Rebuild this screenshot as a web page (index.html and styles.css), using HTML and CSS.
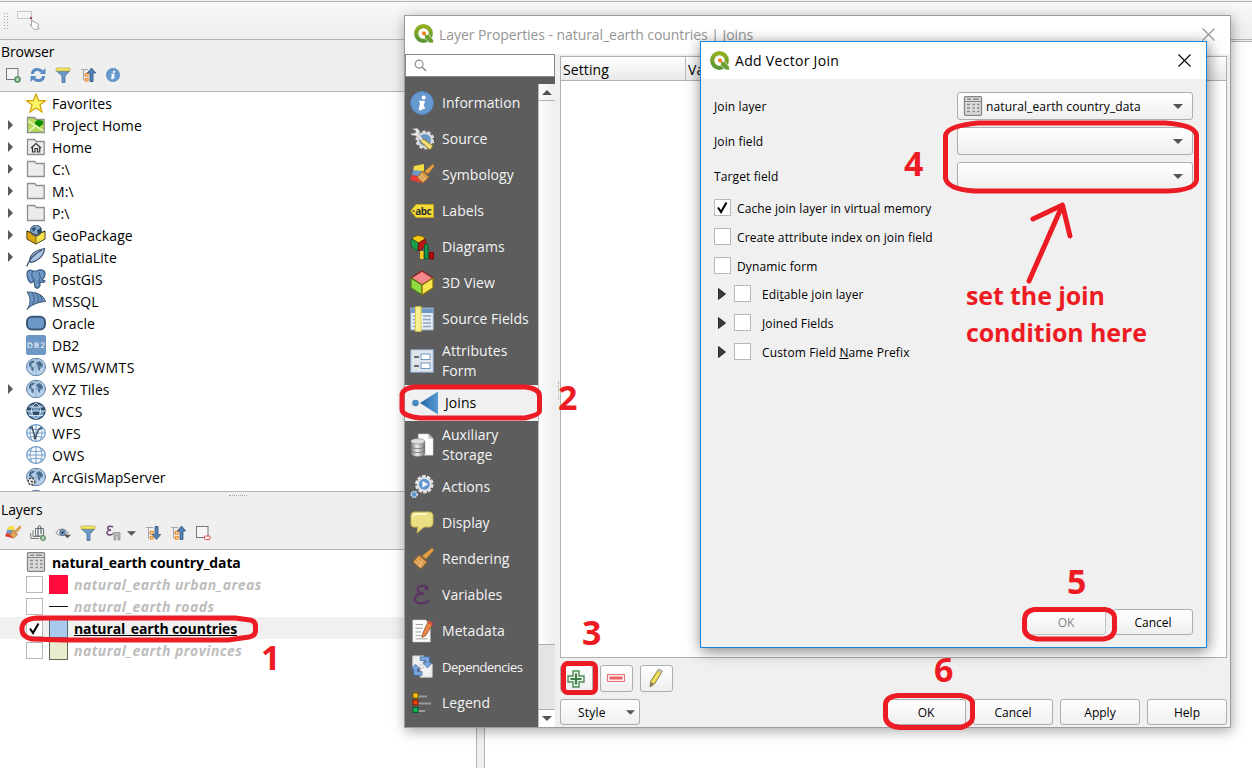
FILE: index.html
```html
<!DOCTYPE html>
<html lang="en">
<head>
<meta charset="utf-8">
<title>Layer Properties - Joins</title>
<link rel="stylesheet" href="styles.css">
</head>
<body>
<svg class="defs" width="0" height="0">
  <defs>
    <linearGradient id="joinGrad"><stop offset="0" stop-color="#2167a3"/><stop offset="1" stop-color="#5a9ad4"/></linearGradient>
    <linearGradient id="cylGrad"><stop offset="0" stop-color="#777"/><stop offset=".45" stop-color="#eee"/><stop offset="1" stop-color="#777"/></linearGradient>
    <linearGradient id="qGrad" x2="0" y2="1"><stop offset="0" stop-color="#93b023"/><stop offset="1" stop-color="#589632"/></linearGradient>
    <symbol id="tri" viewBox="0 0 5 10"><path d="M0 0L5 5L0 10Z" fill="#5a5a5a"/></symbol>
    <symbol id="tri2" viewBox="0 0 8 12"><path d="M.5 .5L7.500 6L.5 11.500Z" fill="#3c3c3c" stroke="#111" stroke-width=".8"/></symbol>
    <symbol id="down" viewBox="0 0 10 5"><path d="M0 0H10L5 5Z" fill="#555"/></symbol>
    <symbol id="tick" viewBox="0 0 17 17"><path d="M4 8.500L7 13L12.500 3.500" fill="none" stroke="#000" stroke-width="2"/></symbol>
    <symbol id="qgis" viewBox="0 0 20 20"><circle cx="9.500" cy="9.500" r="7.300" fill="none" stroke="url(#qGrad)" stroke-width="4.200"/><path d="M10.500 10.500L14.500 10.500L19.500 16V19H15.500L10.500 14Z" fill="#6aa030" stroke="#fff" stroke-width=".7"/><path d="M7.500 7.500L11.500 8L12.500 12Z" fill="#f0a050"/><circle cx="10" cy="9.500" r="1.900" fill="#ee7913"/></symbol>
    <symbol id="close" viewBox="0 0 13 13"><path d="M.5 .5L12.500 12.500M12.500 .5L.5 12.500" fill="none" stroke="currentColor" stroke-width="1.100"/></symbol>
    <symbol id="star" viewBox="0 0 20 20"><path d="M10 1L12.500 7.500L19.300 7.700L14 12L16 19L10 15L4 19L6 12L.7 7.700L7.500 7.500Z" fill="#fbf56a" stroke="#d3a70a" stroke-width="1.300"/></symbol>
    <symbol id="folder" viewBox="0 0 20 20"><path d="M1.500 2.500H8.500L10.500 4.500H18.200V17.500H1.500Z" fill="#ececec" stroke="#8e8e8e" stroke-width="1.300"/></symbol>
    <symbol id="project" viewBox="0 0 20 20"><path d="M1.500 2.500H8.500L10.500 4.500H18.200V17.500H1.500Z" fill="#b5dc58" stroke="#8e8e8e" stroke-width="1.300"/><path d="M2 6L17.500 16M3 16.500L9 11" stroke="#f4fbd9" stroke-width="1.200"/><path d="M9 7L12 4.800L17 6V9L13.500 12L9 9Z" fill="#0a8f08"/></symbol>
    <symbol id="home" viewBox="0 0 20 20"><use href="#folder"/><path d="M5 11L10 6.500L15 11M6.500 10V15H9V11.500H11.500V15H13.700V10" fill="none" stroke="#333" stroke-width="1.200"/></symbol>
    <symbol id="gpkg" viewBox="0 0 20 20"><path d="M1 6L10 10L19 6V14L10 19L1 14Z" fill="#f7e34a" stroke="#4a4320"/><path d="M1 6L10 10V19L1 14Z" fill="#dca60a" stroke="#4a4320" stroke-width=".7"/><circle cx="10" cy="5.500" r="5.500" fill="#86a9cd" stroke="#34506d"/><path d="M6 3L10 2L9 5L7 7ZM11 5L15 3V7L12 9Z" fill="#294a6b"/><path d="M1 6L10 10L19 6" fill="none" stroke="#4a4320"/></symbol>
    <symbol id="feather" viewBox="0 0 20 20"><path d="M3.500 14C4 7 10 3 18.500 1.500C18 8 14 13 5 15.500Z" fill="#a9c5e1" stroke="#3d5573" stroke-width="1.200"/><path d="M.8 19.500C3 13 8 7 16 3" fill="none" stroke="#3d5573" stroke-width="1.300"/></symbol>
    <symbol id="elephant" viewBox="0 0 20 20"><path d="M7 2C3 0 1 2 1 5C1 9 3 13 5 14C7 14 7 12 8 11L9 18C11 20 14 19 14 16V13C17 14 19 13 19 12L16 11C19 8 20 4 18 2C15 0 12 1 11 2Z" fill="#6d98c5" stroke="#3b5b7e" stroke-width="1.200"/><path d="M7 2C5 5 6 9 8 11M13 3C14 7 15 9 13 11V15" fill="none" stroke="#3b5b7e" stroke-width="1"/></symbol>
    <symbol id="mssql" viewBox="0 0 20 20"><path d="M1 1C10 1 17 3 19.500 10.500C12 11 5 14 1 18.500C5 13 5 6 1 1Z" fill="#6d98c5" stroke="#3b5b7e"/><path d="M6 1.500C9 6 9 10 6 14M10 2C13 6 13 10 11 12M14 4C16 7 16 9 15 11" fill="none" stroke="#3b5b7e"/></symbol>
    <symbol id="oracle" viewBox="0 0 20 20"><rect x="1" y="3.800" width="18" height="12.700" rx="5" fill="#6d98c5" stroke="#3b5673" stroke-width="2"/></symbol>
    <symbol id="db2" viewBox="0 0 20 20"><rect width="20" height="20" rx="2" fill="#6d98c5"/><text x="1" y="12.500" font-family="DejaVu Sans" font-size="7.500" textLength="18" fill="#fff">DB2</text></symbol>
    <symbol id="earth" viewBox="0 0 20 20"><ellipse cx="10" cy="10" rx="9.500" ry="8.700" fill="#b9d1e8" stroke="#5e82a8"/><path d="M3 6L6 3.500L9 4L7.500 6L5 7L6 9L8 11L7 14.500L5.500 13L5 10L3 9ZM11 5L14 4L17 7.500L16 11L15 9.500L13.500 14L12 12L11.500 8L10 7ZM10 2.500L12 2.500L11 3.500Z" fill="#4a6d92"/><path d="M10 1.500V18.500M1 10H19" stroke="#83a5c7" stroke-width=".6"/></symbol>
    <symbol id="wcs" viewBox="0 0 20 20"><ellipse cx="10" cy="10" rx="9" ry="8.200" fill="#6d98c5" stroke="#2f4b69" stroke-width="1.400"/><path d="M2 6H7V10H1.500ZM13 6H18V10H13ZM7 10H13V15H7ZM7 2L13 2V6H7Z" fill="#2f4b69"/><path d="M1 10H19M3 14.500H17M3 6H17M10 2C4 6 4 14 10 18C16 14 16 6 10 2" fill="none" stroke="#d5e4f2"/></symbol>
    <symbol id="ows" viewBox="0 0 20 20"><ellipse cx="10" cy="10" rx="9.300" ry="8.300" fill="#f4f8fc" stroke="#6d98c5" stroke-width="1.200"/><path d="M1 10H19M3 5.500C7 7 13 7 17 5.500M3 14.500C7 13 13 13 17 14.500M10 2V18M7 2C3 6 3 14 7 18M13 2C17 6 17 14 13 18" fill="none" stroke="#6d98c5" stroke-width=".9"/></symbol>
    <symbol id="wfs" viewBox="0 0 20 20"><use href="#ows"/><path d="M3.500 5L6 4L9 15L13 6L16 4.500" fill="none" stroke="#3f4f5f" stroke-width="1.400"/><circle cx="9" cy="15" r="1.400" fill="#3f4f5f"/></symbol>
    <symbol id="arcgis" viewBox="0 0 20 20"><use href="#earth"/><circle cx="5.500" cy="14.500" r="3.300" fill="#eee" stroke="#333" stroke-width="1.300" stroke-dasharray="2 1.200"/><path d="M4.500 13.500L7 14L6 16.500Z" fill="#333"/></symbol>
    <symbol id="table" viewBox="0 0 20 20"><rect x="1.500" y=".7" width="17" height="18.600" rx="1" fill="#dcdcdc" stroke="#858585" stroke-width="1.300"/><path d="M2 5.500H18" stroke="#858585"/><path d="M4 3.200H8M10 3.200H16M4 8.500H7M9.500 8.500H12M14 8.500H16.500M4 12H7M9.500 12H12M14 12H16.500M4 15.500H7M9.500 15.500H12M14 15.500H16.500" stroke="#8a8a8a" stroke-width="1.500"/></symbol>
    <symbol id="addlayer" viewBox="0 0 16 16"><rect x="1.500" y="1.500" width="11.500" height="11" fill="#f5f5f5" stroke="#777"/><circle cx="12.500" cy="12.500" r="2.600" fill="#a9cbae" stroke="#4b8856" stroke-width="1.300"/></symbol>
    <symbol id="refresh" viewBox="0 0 16 16"><path d="M2.500 7C2.500 2 9 1 12 4.500M13.500 9C13.500 14 7 15 4 11.500" fill="none" stroke="#5a8cc2" stroke-width="3"/><path d="M15.500 1V7H9.500ZM.5 15V9H6.500Z" fill="#5a8cc2"/></symbol>
    <symbol id="funnel" viewBox="0 0 16 16"><path d="M1.500 4H14.500L10 9V15.500H7V9Z" fill="#6d98c5" stroke="#44709e" stroke-width=".8"/><rect x="1" y="1" width="14" height="3" rx=".7" fill="#f5e763" stroke="#b4a43c" stroke-width=".7"/></symbol>
    <symbol id="treebits" viewBox="0 0 16 16"><path d="M1 2.500H8M3.500 3V13H5M3.500 8H5" fill="none" stroke="#a5a5a5"/><rect x="5.500" y="6.500" width="2.500" height="2.500" fill="#fff" stroke="#f18b25" stroke-width="1.200"/><rect x="5.500" y="11.500" width="2.500" height="2.500" fill="#fff" stroke="#f18b25" stroke-width="1.200"/></symbol>
    <symbol id="collapse" viewBox="0 0 16 16"><use href="#treebits"/><path d="M11.500 1L15.700 6H13V14.500H10V6H7.300Z" fill="#5582b5" stroke="#2e537c" stroke-width=".8"/></symbol>
    <symbol id="expand" viewBox="0 0 16 16"><use href="#treebits"/><path d="M10 1.500H13V9.500H15.700L11.500 14.500L7.300 9.500H10Z" fill="#5582b5" stroke="#2e537c" stroke-width=".8"/></symbol>
    <symbol id="info" viewBox="0 0 24 24"><circle cx="12" cy="12" r="11.500" fill="#6699d0" stroke="#4f80b5"/><circle cx="13.700" cy="6.500" r="2" fill="#fff"/><path d="M9 10.500H14L12.300 17.500L15 16.500M13.500 11L11.500 18.500H9.500L11 11" fill="#fff" stroke="#fff" stroke-width="1.500"/></symbol>
    <symbol id="brush" viewBox="0 0 24 24"><path d="M22 1L24 3L16 12L12 9Z" fill="#e6a044" stroke="#a86d23" stroke-width=".6"/><path d="M9 8L17 15L11 22L3 15Z" fill="#d99a4c" stroke="#9a621c" stroke-width=".8"/><path d="M7 12L13 18M5 14L11 20M9 20L13 13" stroke="#f3cf98" stroke-width=".8"/></symbol>
    <symbol id="symbology" viewBox="0 0 24 24"><path d="M4 3L14 1L14 8L3 8Z" fill="#f4dc43"/><path d="M3 7L12 8L9 14L2 12Z" fill="#6d98c5"/><path d="M2 12L8 13L12 20L0 17Z" fill="#e83a36"/><path d="M23 1L24.500 3L18 11L14.500 8.500Z" fill="#e6a044" stroke="#a86d23" stroke-width=".6"/><path d="M12.500 8L19 14L13 20L7 15Z" fill="#d99a4c" stroke="#9a621c" stroke-width=".8"/><path d="M11 11L16 17M9 13L14 18" stroke="#f3cf98" stroke-width=".8"/></symbol>
    <symbol id="pages" viewBox="0 0 16 16"><path d="M.8 8V13.500H9M3 5.500V11.500H10M5.500 3.500H13.500V11H5.500Z" fill="none" stroke="#777"/><path d="M8 11V3C8 0 11 0 11 3V9" fill="none" stroke="#456"/><circle cx="13" cy="13" r="2.500" fill="#a9cbae" stroke="#4b8856"/></symbol>
    <symbol id="eye" viewBox="0 0 18 16"><path d="M1 8C4 2 11 2 15 8C11 11 5 12 1 8Z" fill="#eee" stroke="#888"/><circle cx="8.500" cy="7.500" r="3.300" fill="#7ba4cd" stroke="#46688a"/><circle cx="8.500" cy="7.500" r="1.300" fill="#222"/><path d="M10 10H18L14 14Z" fill="#555"/></symbol>
    <symbol id="epsfunnel" viewBox="0 0 16 16"><path d="M8 2C4 0 2 2 3 4C4 5.500 6 5 6 5C2 5 1 8 3 9.500C5 10.500 7 9.500 8 8.500" fill="none" stroke="#6d4a78" stroke-width="1.500"/><path d="M8.500 7.500H15V15H13V11L11 10V15H9V10Z" fill="#bbb" stroke="#888" stroke-width=".7"/></symbol>
    <symbol id="remove" viewBox="0 0 16 16"><rect x="1.500" y="1.500" width="11.500" height="11" fill="#f5f5f5" stroke="#777"/><rect x="9.500" y="11" width="5.500" height="3.500" rx="1" fill="#fff" stroke="#e04848"/></symbol>
    <symbol id="source" viewBox="0 0 24 24"><circle cx="15" cy="13" r="7" fill="#6d98c5" stroke="#ddd" stroke-width="2"/><circle cx="15" cy="13" r="8.500" fill="none" stroke="#ddd" stroke-width="2" stroke-dasharray="3.300 2"/><path d="M12 11L23 19L20 23L10 14Z" fill="#f3df75" stroke="#8b7a28"/><path d="M2 2L7 1L10 4L9 7L13 12L11 14L6 9L1 8L1 6.500L5 6L6 4Z" fill="#e5e5e5" stroke="#777" stroke-width=".5"/></symbol>
    <symbol id="labels" viewBox="0 0 24 24"><path d="M6 5.500H23.500V18.500H6L.8 12Z" fill="#f3dc38" stroke="#c5a51a"/><circle cx="3.700" cy="12" r="1" fill="#555"/><text x="5.300" y="15.500" font-family="Noto Sans" font-weight="bold" font-size="10" textLength="16.500" fill="#333">abc</text></symbol>
    <symbol id="diagrams" viewBox="0 0 24 24"><path d="M8.500 8L2 4C4 0 12-1 15 4Z" fill="#f5c814" stroke="#604800" stroke-width=".7"/><path d="M8.500 8L2 4C-1 8 2 15 8 15.500Z" fill="#1c9d4b" stroke="#104d24" stroke-width=".7"/><path d="M8.500 8L15 4C18 9 13 15.500 8 15.500Z" fill="#b81818" stroke="#5b0909" stroke-width=".7"/><path d="M10 16H13.500V24H10Z" fill="#f5c814"/><path d="M14.500 9.500H18V24H14.500Z" fill="#18984a" stroke="#09582a"/><path d="M19.500 17.500H23.500V24H19.500Z" fill="#b80c0c" stroke="#700"/></symbol>
    <symbol id="cube" viewBox="0 0 24 26"><path d="M12 1L23 8L12 15L1 8Z" fill="#f48888" stroke="#8e2020" stroke-width="1.300"/><path d="M1 8L12 15V25L1 18Z" fill="#8fdc3e" stroke="#4e7417" stroke-width="1.200"/><path d="M23 8L12 15V25L23 18Z" fill="#fae64e" stroke="#806b11" stroke-width="1.200"/></symbol>
    <symbol id="fields" viewBox="0 0 24 26"><rect x=".7" y="2" width="22.600" height="22" fill="#e8edf3" stroke="#8ca5bf"/><path d="M1 2.500H23V7H1Z" fill="#6d98c5"/><path d="M3 10H9M3 13.500H9M3 17H9M3 20.500H9M13 10H21M13 13.500H21M13 17H21M13 20.500H21" stroke="#8ba8c5" stroke-width="1.500"/><rect x="5.500" y=".8" width="5.500" height="24.500" fill="#f7ef94" stroke="#e0cf46"/></symbol>
    <symbol id="form" viewBox="0 0 24 24"><rect x=".7" y=".7" width="22.600" height="22.600" fill="#e1e6ed" stroke="#7e9fc2"/><path d="M4 8H9M4 17H9" stroke="#444" stroke-width="1.300"/><rect x="11" y="5" width="9" height="5.500" fill="#fff" stroke="#6d98c5"/><rect x="11" y="14" width="9" height="5.500" fill="#fff" stroke="#6d98c5"/></symbol>
    <symbol id="joins" viewBox="0 0 28 24"><circle cx="5.500" cy="12" r="3.300" fill="#4a89c2"/><path d="M28 .5V23.500L10 12Z" fill="url(#joinGrad)"/></symbol>
    <symbol id="aux" viewBox="0 0 26 26"><path d="M9 1H20L25 6V24H9Z" fill="#fff" stroke="#ccc" stroke-width=".5"/><path d="M20 1V6H25Z" fill="#bbb"/><path d="M.8 9V22C.8 27 16 27 16 22V9Z" fill="url(#cylGrad)" stroke="#555" stroke-width=".6"/><ellipse cx="8.400" cy="9" rx="7.600" ry="3" fill="#ddd" stroke="#777" stroke-width=".6"/><path d="M1 14C1 18 16 18 16 14M1 18.500C1 22 16 22 16 18.500" fill="none" stroke="#666" stroke-width=".8"/></symbol>
    <symbol id="actions" viewBox="0 0 26 26"><circle cx="15.500" cy="10" r="8.500" fill="none" stroke="#e2e2e2" stroke-width="3" stroke-dasharray="3.800 1.540"/><circle cx="15.500" cy="10" r="7" fill="#5f94ce" stroke="#e2e2e2" stroke-width="2.200"/><path d="M13.500 6.500L19.500 10L13.500 13.500Z" fill="#fff"/><circle cx="4.500" cy="21" r="3.200" fill="#5f94ce" stroke="#ccd9e6" stroke-width="1.700" stroke-dasharray="1.800 .8"/></symbol>
    <symbol id="display" viewBox="0 0 24 24"><path d="M4 1H19C22 1 23 3 23 5V12C23 15 21 16 19 16H14L7 22L8 16H4C2 16 1 15 1 12V5C1 3 2 1 4 1Z" fill="#ebdf84" stroke="#c8b54c"/><path d="M3 6C3 3.500 4 3 7 3H17" fill="none" stroke="#fffbe0" stroke-width="1.500"/></symbol>
    <symbol id="vars" viewBox="0 0 24 24"><path d="M17.500 6C16 1 7 2 7.500 6.500C8 10 12 10.500 14 10.500C8 10 4 13 5 17C6 21 15 22 19 17" fill="none" stroke="#5c3566" stroke-width="2.400"/><circle cx="16.500" cy="5.500" r="2" fill="#5c3566"/></symbol>
    <symbol id="meta" viewBox="0 0 26 26"><path d="M3 1H17L22 6V25H3Z" fill="#fbfbfb" stroke="#ccc" stroke-width=".5"/><path d="M6 6H14M6 10H14M6 14H12M6 18H17M6 21.500H19" stroke="#999"/><path d="M20 2L25 5L17 18L13 20L14 15Z" fill="#e98545" stroke="#8d4b22" stroke-width=".8"/><path d="M20 2L25 5L24 7L19 4Z" fill="#e04f45"/></symbol>
    <symbol id="deps" viewBox="0 0 26 26"><path d="M3 1H15V14H3ZM11 10H24V24H11Z" fill="#f1f1f1" stroke="#ccc"/><path d="M11 2H21V8H24L19 14L14 8H17V6H11ZM13 22H4V15H1L6 10L11 15H8V18H13Z" fill="#7ba6dd" stroke="#3d68a2" stroke-width=".8"/></symbol>
    <symbol id="legend" viewBox="0 0 24 24"><path d="M8 5.500H17M8 12.500H21M8 20H15" stroke="#999" stroke-width="2"/><rect x="3" y="2" width="5" height="5" fill="#ffc814" stroke="#7a5900"/><rect x="3" y="9" width="5" height="5" fill="#f0460c" stroke="#781c00"/><rect x="3" y="16.500" width="5" height="5" fill="#12b254" stroke="#075727"/></symbol>
    <symbol id="plus" viewBox="0 0 18 18"><path d="M6 1H12V6H17V12H12V17H6V12H1V6H6Z" fill="#eef7ee" stroke="#4d8c57" stroke-width="1.400"/><path d="M9 3.500V14.500M3.500 9H14.500" stroke="#3f7e4a" stroke-width="2.200"/></symbol>
    <symbol id="minus" viewBox="0 0 18 8"><rect x=".6" y=".6" width="16.800" height="6.800" fill="#fff" stroke="#ee6262"/><rect x="2.500" y="2.500" width="13" height="3" fill="#ee6262"/></symbol>
    <symbol id="pencil" viewBox="0 0 16 20"><path d="M10.500 1L14.500 3L6.500 16L2 19L2.500 13.500Z" fill="#e7d044" stroke="#8d8450"/><path d="M10.500 1L14.500 3L13.500 5L9.300 3Z" fill="#bbb"/><path d="M3 14.500L6 16L2 19Z" fill="#777"/><path d="M11 5L5 14" stroke="#fff3a0"/></symbol>
    <symbol id="digitize" viewBox="0 0 24 22"><path d="M.5 1.500H14.500V8.500H.5Z" fill="none" stroke="#c6c6c6"/><path d="M14.500 9V16L13 14.500L17 19.500H20.500L21.500 14L18 12H16L14.500 9M21 17L23 19.500" fill="#fff" stroke="#aaa"/><circle cx="14" cy="8" r="1.200" fill="#b04a6e"/></symbol>
  </defs>
</svg>

<div class="desktop">
  <div class="app">
    <div class="toolbar"><span class="grip"></span><svg class="tool-digitize"><use href="#digitize"/></svg></div>
    <div class="workspace">
      <aside class="dock">
        <div class="panel-head browser-head">
          <h2>Browser</h2>
          <div class="tools"><svg><use href="#addlayer"/></svg><svg><use href="#refresh"/></svg><svg><use href="#funnel"/></svg><svg><use href="#collapse"/></svg><svg class="i14"><use href="#info"/></svg></div>
        </div>
        <ul class="tree">
          <li><i></i><svg><use href="#star"/></svg>Favorites</li>
          <li><i><svg><use href="#tri"/></svg></i><svg><use href="#project"/></svg>Project Home</li>
          <li><i><svg><use href="#tri"/></svg></i><svg><use href="#home"/></svg>Home</li>
          <li><i><svg><use href="#tri"/></svg></i><svg><use href="#folder"/></svg>C:\</li>
          <li><i><svg><use href="#tri"/></svg></i><svg><use href="#folder"/></svg>M:\</li>
          <li><i><svg><use href="#tri"/></svg></i><svg><use href="#folder"/></svg>P:\</li>
          <li><i><svg><use href="#tri"/></svg></i><svg><use href="#gpkg"/></svg>GeoPackage</li>
          <li><i><svg><use href="#tri"/></svg></i><svg><use href="#feather"/></svg>SpatiaLite</li>
          <li><i></i><svg><use href="#elephant"/></svg>PostGIS</li>
          <li><i></i><svg><use href="#mssql"/></svg>MSSQL</li>
          <li><i></i><svg><use href="#oracle"/></svg>Oracle</li>
          <li><i></i><svg><use href="#db2"/></svg>DB2</li>
          <li class="caps"><i></i><svg><use href="#earth"/></svg>WMS/WMTS</li>
          <li><i><svg><use href="#tri"/></svg></i><svg><use href="#earth"/></svg>XYZ Tiles</li>
          <li class="caps"><i></i><svg><use href="#wcs"/></svg>WCS</li>
          <li class="caps"><i></i><svg><use href="#wfs"/></svg>WFS</li>
          <li class="caps"><i></i><svg><use href="#ows"/></svg>OWS</li>
          <li><i></i><svg><use href="#arcgis"/></svg>ArcGisMapServer</li>
          <li><i></i><svg><use href="#earth"/></svg></li>
        </ul>
        <div class="panel-head layers-head">
          <span class="dots"></span>
          <h2>Layers</h2>
          <div class="tools"><svg><use href="#symbology"/></svg><svg><use href="#pages"/></svg><svg class="i18"><use href="#eye"/></svg><svg><use href="#funnel"/></svg><svg><use href="#epsfunnel"/></svg><svg class="drop"><use href="#down"/></svg><svg><use href="#expand"/></svg><svg><use href="#collapse"/></svg><svg><use href="#remove"/></svg></div>
        </div>
        <ul class="layers">
          <li><svg class="i20"><use href="#table"/></svg><b class="solid">natural_earth country_data</b></li>
          <li><span class="check"></span><span class="swatch urban"></span><b class="off">natural_earth urban_areas</b></li>
          <li><span class="check"></span><span class="line"></span><b class="off">natural_earth roads</b></li>
          <li class="current"><span class="check"><svg><use href="#tick"/></svg></span><span class="swatch countries"></span><b class="solid active">natural_earth countries</b></li>
          <li><span class="check"></span><span class="swatch provinces"></span><b class="off">natural_earth provinces</b></li>
        </ul>
      </aside>
      <div class="splitter"></div>
      <main class="canvas"></main>
    </div>
  </div>

  <section class="window props">
    <header><svg class="i20"><use href="#qgis"/></svg><span>Layer Properties - natural_earth countries | Joins</span><svg class="x"><use href="#close"/></svg></header>
    <div class="props-body">
      <nav class="side">
        <div class="search"><svg viewBox="0 0 14 14"><circle cx="5.500" cy="5.500" r="4.300" fill="none" stroke="#888" stroke-width="1.200"/><path d="M8.700 8.700L13 13" stroke="#888" stroke-width="1.500"/></svg></div>
        <div class="side-main">
          <ul class="pages">
            <li><svg><use href="#info"/></svg><span>Information</span></li>
            <li><svg><use href="#source"/></svg><span>Source</span></li>
            <li><svg><use href="#symbology"/></svg><span>Symbology</span></li>
            <li><svg><use href="#labels"/></svg><span>Labels</span></li>
            <li><svg><use href="#diagrams"/></svg><span>Diagrams</span></li>
            <li><svg><use href="#cube"/></svg><span>3D View</span></li>
            <li><svg><use href="#fields"/></svg><span>Source Fields</span></li>
            <li class="two"><svg><use href="#form"/></svg><span>Attributes<br>Form</span></li>
            <li class="on"><svg><use href="#joins"/></svg><span>Joins</span></li>
            <li class="two"><svg><use href="#aux"/></svg><span>Auxiliary<br>Storage</span></li>
            <li><svg><use href="#actions"/></svg><span>Actions</span></li>
            <li><svg><use href="#display"/></svg><span>Display</span></li>
            <li><svg><use href="#brush"/></svg><span>Rendering</span></li>
            <li><svg><use href="#vars"/></svg><span>Variables</span></li>
            <li><svg><use href="#meta"/></svg><span>Metadata</span></li>
            <li class="small"><svg><use href="#deps"/></svg><span>Dependencies</span></li>
            <li><svg><use href="#legend"/></svg><span>Legend</span></li>
          </ul>
          <div class="scroll"><span class="up"><svg><use href="#down"/></svg></span><span class="thumb"></span><span class="track"></span><span class="dn"><svg><use href="#down"/></svg></span></div>
        </div>
      </nav>
      <div class="handle"><span></span></div>
      <div class="page">
        <div class="grid"><div class="grid-head"><span>Setting</span><span>Value</span></div></div>
        <div class="edit"><button class="plus"><svg><use href="#plus"/></svg></button><button class="minus"><svg><use href="#minus"/></svg></button><button class="pencil"><svg><use href="#pencil"/></svg></button></div>
        <div class="actions"><button class="style">Style<svg><use href="#down"/></svg></button><button>OK</button><button>Cancel</button><button>Apply</button><button>Help</button></div>
      </div>
    </div>
  </section>

  <section class="window join">
    <header><svg class="i20"><use href="#qgis"/></svg><span>Add Vector Join</span><svg class="x"><use href="#close"/></svg></header>
    <div class="join-body">
      <div class="field"><label>Join layer</label><div class="combo"><svg class="i20"><use href="#table"/></svg><span>natural_earth country_data</span><svg class="arrow"><use href="#down"/></svg></div></div>
      <div class="field"><label>Join field</label><div class="combo"><svg class="arrow"><use href="#down"/></svg></div></div>
      <div class="field"><label>Target field</label><div class="combo"><svg class="arrow"><use href="#down"/></svg></div></div>
      <div class="checks">
        <label><span class="check"><svg><use href="#tick"/></svg></span><span class="caption">Cache join layer in virtual memory</span></label>
        <label><span class="check"></span><span class="caption">Create attribute index on join field</span></label>
        <label><span class="check"></span><span class="caption">Dynamic form</span></label>
      </div>
      <div class="groups">
        <label><svg><use href="#tri2"/></svg><span class="check"></span><span class="caption">Edi<u>t</u>able join layer</span></label>
        <label><svg><use href="#tri2"/></svg><span class="check"></span><span class="caption"><u>J</u>oined Fields</span></label>
        <label><svg><use href="#tri2"/></svg><span class="check"></span><span class="caption">Custom Field <u>N</u>ame Prefix</span></label>
      </div>
      <footer><button disabled>OK</button><button>Cancel</button></footer>
    </div>
  </section>

  <svg class="marks" viewBox="0 0 1252 768">
    <g class="pen">
      <path d="M37 618H235L250 620Q255.500 621 255.500 626V631Q255 636 249 637L228 640H62L32 639Q22 637 22 630Q21 619 37 618Z"/>
      <path d="M414 387H526Q539.500 389 539.500 396V411Q539 415 525 418H420Q403 416 402 410V394Q404 388 414 387Z"/>
      <rect x="563.500" y="663.500" width="32" height="29" rx="4"/>
      <path d="M978 123H1165Q1195 125 1196.500 135V180Q1195 190 1168 191H974Q947 189 945.500 178V136Q946 126 978 123Z"/>
      <path d="M1034 609.500H1105Q1114 611 1114.500 617V630Q1114 637 1104 639H1037Q1025 637 1024.500 629V619Q1025 611 1034 609.500Z"/>
      <path d="M898 695.500H961Q971 697 972.500 702V718Q972 724 961 727.500H900Q886 726 885.500 717V704Q886 697 898 695.500Z"/>
      <path d="M1029 281L1062.500 205L1070 236M1062.500 205L1033 219"/>
    </g>
    <g class="ink">
      <text x="261" y="670" class="num">1</text>
      <text x="558" y="410" class="num">2</text>
      <text x="582" y="645" class="num">3</text>
      <text x="904" y="176" class="num">4</text>
      <text x="1067" y="594" class="num">5</text>
      <text x="934" y="682" class="num">6</text>
      <text x="966" y="305" textLength="139">set the join</text>
      <text x="966" y="342" textLength="181">condition here</text>
    </g>
  </svg>
</div>
</body>
</html>
```
FILE: styles.css
```css
* { box-sizing: border-box; }
body { margin: 0; overflow: hidden; }
.defs { position: absolute; }
h2, ul { margin: 0; padding: 0; font-weight: normal; list-style: none; }
svg { flex: none; display: block; overflow: visible; }
button { font: inherit; padding: 0; color: #000; }

.desktop {
  position: relative; width: 1252px; height: 768px; overflow: hidden;
  background: #fff; font: 14px "Open Sans", "Noto Sans", sans-serif; color: #000; white-space: nowrap;
}
.i20 { width: 20px; height: 20px; }

/* main application window */
.app { display: flex; flex-direction: column; height: 768px; background: #efefef; }
.toolbar {
  display: flex; align-items: center; height: 39px; margin-top: 1px; padding-left: 3px;
  border: solid #b4b4b4; border-width: 1px 0; background: linear-gradient(#f8f8f8, #eee);
}
.grip { width: 5px; height: 17px; background: radial-gradient(circle, #aaa 35%, transparent 45%) 0 0 / 3px 3px; }
.tool-digitize { width: 24px; height: 22px; margin: 0 0 0 9px; }
.workspace { display: flex; flex: 1; min-height: 0; }
.dock { display: flex; flex-direction: column; width: 476px; }
.splitter { width: 9px; border: solid #b4b4b4; border-width: 0 1px; background: #efefef; }
.canvas { flex: 1; margin-top: 1px; border-top: 1px solid #b4b4b4; background: #fff; }
.panel-head { display: flex; flex-direction: column; }
.panel-head h2 { padding-left: 1px; font-size: 14px; line-height: 20px; letter-spacing: -.15px; }
.browser-head { height: 52px; padding-top: 2px; border-bottom: 1px solid #b4b4b4; }
.tools { display: flex; align-items: center; gap: 9px; height: 24px; padding: 2px 0 0 5px; }
.tools svg { width: 16px; height: 16px; }
.tools .i14 { width: 14px; height: 14px; margin-left: 1px; }
.tools .drop { width: 9px; height: 5px; margin: 0 0 0 -3px; }
.tree { height: 399px; background: #fff; overflow: hidden; }
.tree li { display: flex; align-items: center; height: 22px; padding-left: 8px; letter-spacing: .08px; }
.tree .caps { letter-spacing: .45px; }
.tree i { width: 18px; }
.tree i svg { width: 5px; height: 10px; }
.tree li > svg { width: 20px; height: 20px; margin-right: 6px; }
.layers-head { height: 59px; border: solid #b4b4b4; border-width: 1px 0; }
.dots { width: 18px; height: 4px; margin-left: 229px; padding-top: 3px; border-bottom: 1px dotted #aaa; }
.layers-head h2 { margin-top: 4px; }
.layers { flex: 1; padding-top: 1px; background: #fff; }
.layers li { display: flex; align-items: center; height: 22px; padding-left: 26px; }
.layers b { font-size: 14px; letter-spacing: -.13px; }
.layers .current { background: #f0f0f0; }
.layers .solid { margin-left: 6px; }
.layers .off { margin-left: 6px; color: #bdbdbd; font-style: italic; letter-spacing: .44px; }
.active { text-decoration: underline; }
.check { width: 17px; height: 17px; flex: none; border: 1px solid #b8b8b8; background: #fff; }
.check svg { width: 17px; height: 17px; margin: -1px; }
.swatch { width: 19px; height: 19px; margin-left: 6px; border: 1px solid #555; }
.urban { background: #ff0a3a; border-color: #ff0a3a; }
.countries { background: #a9caed; border-color: #567; }
.provinces { background: #e9edcd; border-color: #665; }
.line { width: 19px; height: 1px; margin-left: 6px; background: #111; }

/* windows */
.window { position: absolute; display: flex; flex-direction: column; background: #f0f0f0; }
.window header { display: flex; align-items: center; background: #fff; }
.window header .x { width: 13px; height: 13px; margin-left: auto; }
.window button {
  width: 80px; height: 26px; border: 1px solid #adadad; border-radius: 3px;
  background: linear-gradient(#fff, #efefef); font-size: 12px;
}
.props { left: 404px; top: 15px; width: 827px; height: 713px; border: 1px solid #9c9c9c; box-shadow: 1px 3px 12px rgba(0,0,0,.35); }
.props header { height: 38px; padding: 0 15px 2px 9px; color: #959595; }
.props header span { letter-spacing: -.07px; margin-left: 5px; }
.props-body { display: flex; flex: 1; min-height: 0; }
.side { display: flex; flex-direction: column; width: 150px; background: #5d5d5d; }
.search { display: flex; align-items: center; height: 23px; margin-bottom: 7px; padding-left: 8px; border: 1px solid #8a8a8a; background: #fff; }
.search svg { width: 13px; height: 13px; }
.side-main { display: flex; flex: 1; min-height: 0; }
.pages { width: 133px; padding-top: 1px; color: #f4f4f4; }
.pages li { display: flex; align-items: center; height: 36px; padding-left: 5px; line-height: 20px; letter-spacing: .06px; }
.pages li svg { width: 24px; height: 26px; margin-right: 8px; }
.pages .two { height: 48px; }
.pages .on { background: #f0f0f0; color: #000; }
.pages .on svg { width: 28px; height: 24px; margin-right: 7px; }
.pages .small { font-size: 13px; letter-spacing: -.48px; }
.scroll { display: flex; flex-direction: column; width: 17px; background: linear-gradient(90deg, #fdfdfd, #eee); border-left: 1px solid #bbb; }
.scroll span { display: flex; align-items: center; justify-content: center; }
.scroll svg { width: 10px; height: 5px; }
.up { height: 17px; border-bottom: 1px solid #b0b0b0; }
.up svg { transform: rotate(180deg); }
.thumb { flex: 1; }
.track { height: 66px; border: solid #b0b0b0; border-width: 1px 0; background: #e4e4e4; }
.dn { height: 17px; background: #fff; }
.handle { display: flex; align-items: center; justify-content: flex-end; width: 5px; }
.handle span { width: 2px; height: 18px; border-left: 1px dotted #aaa; }
.page { display: flex; flex-direction: column; flex: 1; padding: 2px 3px 2px 0; }
.grid { height: 602px; border: 1px solid #b0b0b0; background: #fff; }
.grid-head { display: flex; height: 24px; border-bottom: 1px solid #b0b0b0; background: linear-gradient(#fff, #e9e9e9); }
.grid-head span { width: 125px; padding-left: 2px; line-height: 25px; border-right: 1px solid #b8b8b8; letter-spacing: .1px; }
.edit { display: flex; gap: 7px; padding-top: 7px; }
.edit button { display: flex; align-items: center; justify-content: center; width: 33px; height: 27px; }
.plus svg { width: 18px; height: 18px; margin-left: -2px; }
.minus svg { width: 18px; height: 8px; margin: -1px 0 0 -1px; }
.pencil svg { width: 16px; height: 20px; margin-left: -2px; margin-top: -1px; }
.actions { display: flex; gap: 7px; margin-top: 7px; }
.actions .style { display: flex; align-items: center; justify-content: space-between; margin-right: auto; padding: 0 4px 0 17px; letter-spacing: .2px; }
.style svg { width: 9px; height: 5px; }

.join { left: 700px; top: 41px; width: 507px; height: 607px; border: 1px solid #1883d7; box-shadow: 1px 3px 14px rgba(0,0,0,.5); font-size: 12px; letter-spacing: .12px; }
.join header { height: 37px; padding: 0 15px 0 9px; font-size: 14px; }
.join header span { margin-left: 5px; letter-spacing: .3px; }
.join-body { display: flex; flex-direction: column; flex: 1; padding: 13px 13px 12px; }
.field { display: flex; align-items: center; justify-content: space-between; height: 28px; margin-bottom: 7px; }
.combo { display: flex; align-items: center; width: 236px; height: 28px; padding: 0 9px 0 5px; border: 1px solid #adadad; border-radius: 3px; background: linear-gradient(#fff, #efefef); }
.combo .arrow { width: 10px; height: 5px; margin-left: auto; }
.combo span { margin-left: 3px; }
.checks, .groups { display: flex; flex-direction: column; gap: 12px; }
.checks { margin-top: 2px; }
.groups { margin-top: 11px; }
.checks label, .groups label { display: flex; align-items: center; height: 17px; gap: 6px; }
.caption { padding-top: 2px; }
.groups label { gap: 0; padding-left: 4px; }
.groups label > svg { width: 8px; height: 12px; margin-right: 8px; }
.groups .check { margin-right: 11px; }
.join footer { display: flex; justify-content: flex-end; gap: 7px; margin-top: auto; }
.join button:disabled { color: #838383; border-color: #c4c4c4; }

/* tutorial mark-up */
.marks { position: absolute; left: 0; top: 0; width: 1252px; height: 768px; pointer-events: none; }
.pen { fill: none; stroke: #ed1c24; stroke-width: 5px; stroke-linejoin: round; stroke-linecap: round; }
.ink { fill: #ed1c24; font: bold 25px "Open Sans", sans-serif; }
.num { font-size: 34px; }
```
